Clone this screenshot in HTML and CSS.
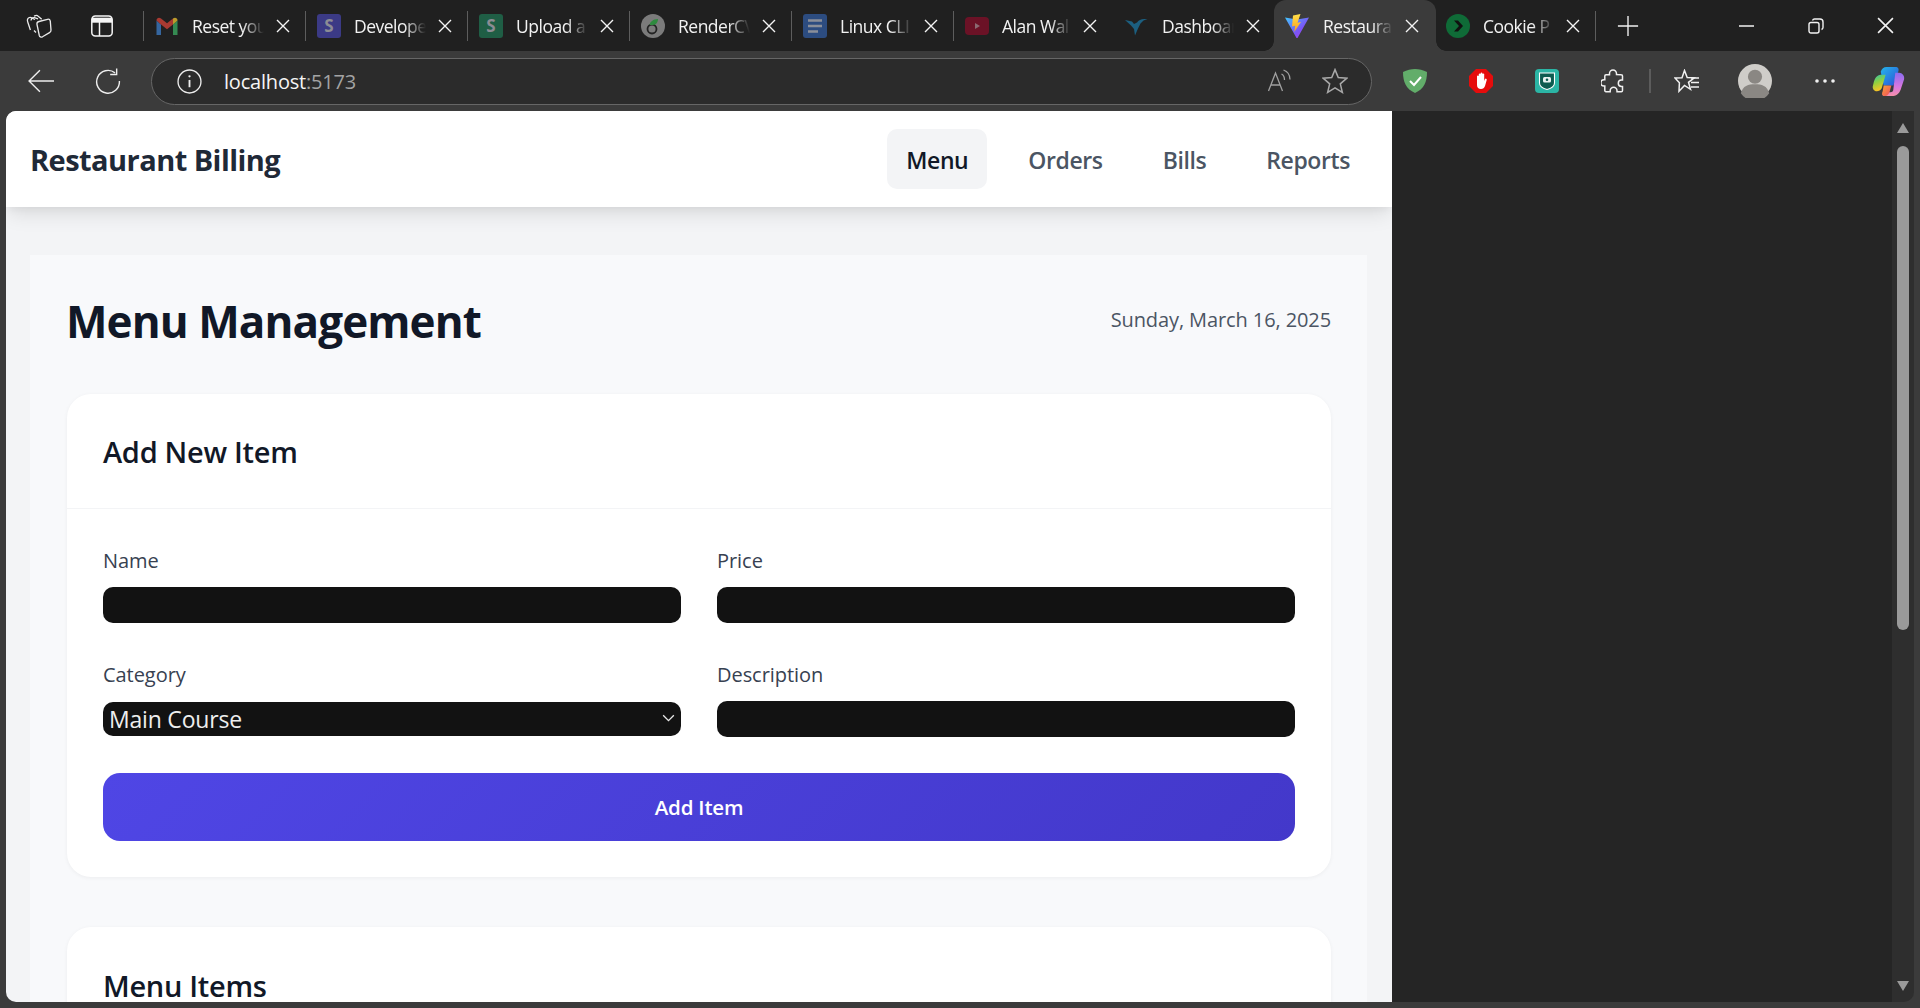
FILE: index.html
```html
<!DOCTYPE html>
<html lang="en">
<head>
<meta charset="utf-8">
<title>Restaurant Billing</title>
<link rel="stylesheet" href="styles.css">
</head>
<body>
<svg class="defs" width="0" height="0" aria-hidden="true">
  <defs>
    <symbol id="x" viewBox="0 0 14 14"><path d="M1 1l12 12M13 1L1 13" stroke="#f4f4f4" stroke-width="1.400" fill="none"/></symbol>
    <linearGradient id="vt" x1="0" y1="0" x2="1" y2="1"><stop offset="0" stop-color="#41c7ff"/><stop offset=".6" stop-color="#7b55f5"/><stop offset="1" stop-color="#b13cf0"/></linearGradient>
    <linearGradient id="vb" x1="0" y1="0" x2="0" y2="1"><stop offset="0" stop-color="#ffe14a"/><stop offset="1" stop-color="#ff9d1a"/></linearGradient>
    <linearGradient id="cpa" x1="0" y1="0" x2="1" y2="1"><stop offset="0" stop-color="#25b6ea"/><stop offset="1" stop-color="#2a50d8"/></linearGradient>
    <linearGradient id="cpb" x1="0" y1="0" x2=".3" y2="1"><stop offset="0" stop-color="#2fc2b0"/><stop offset=".5" stop-color="#8fd140"/><stop offset="1" stop-color="#f7c325"/></linearGradient>
    <linearGradient id="cpc" x1="0" y1="0" x2="0" y2="1"><stop offset="0" stop-color="#8a6cf0"/><stop offset=".6" stop-color="#d977e0"/><stop offset="1" stop-color="#f58fa8"/></linearGradient>
    <linearGradient id="cpd" x1="0" y1="0" x2="1" y2="1"><stop offset="0" stop-color="#f9a03a"/><stop offset="1" stop-color="#ee4a5c"/></linearGradient>
  </defs>
</svg>
<div class="browser">
  <div class="tabbar">
    <div class="tabbar-left">
      <svg class="ico" viewBox="0 0 26 26" width="26" height="26" fill="none" stroke="#eaeaea" stroke-width="1.300"><path d="M9 6.500 5 4.600C3.500 4 2 5 1.500 6.500c-.3 1 0 2 .4 3l2.500 7.500"/><path d="M8 3.200 9.500 2.600c1-.4 2-.1 2.700.6l3.500 3"/><path d="M5 7.500c.2-1.800 1.500-3 3.500-2.800l3.500 1.200"/><path d="M13 8.500l8.500-2.200c1.400-.3 2.500.5 2.800 1.800l.7 9c.1 1.200-.5 2-1.500 2.500l-7 4.200c-1.500.7-2.800.1-3.200-1.300L11 11.500c-.3-1.400.4-2.600 2-3z"/><path d="M8 17.500l2 2"/></svg>
      <svg class="ico ico-vt" viewBox="0 0 24 24" width="24" height="24" fill="none" stroke="#f5f5f5" stroke-width="1.500"><rect x="1.800" y="2" width="20.400" height="20" rx="3.500"/><path d="M2 6.200h20" stroke-width="5"/><path d="M9.500 8v14"/></svg>
    </div>
    <div class="tab">
      <svg class="fav" viewBox="0 0 24 24"><path d="M1.500 6.500V21H6V10.500z" fill="#35669f"/><path d="M22.500 6.500V21H18V10.500z" fill="#358a52"/><path d="M1.500 6.500C1.500 4 4 3 6 4.500l6 4.700 6-4.700V10.500l-6 4.700-6-4.700z" fill="#a83a32"/><path d="M18 4.500c2-1.500 4.500-.5 4.500 2l-4.500 4z" fill="#bb9a2c"/></svg>
      <span class="tab-label">Reset your</span>
      <svg class="tab-x"><use href="#x"/></svg>
    </div>
    <div class="tab">
      <span class="fav-box fav-indigo">S</span>
      <span class="tab-label">Developer</span>
      <svg class="tab-x"><use href="#x"/></svg>
    </div>
    <div class="tab">
      <span class="fav-box fav-green">S</span>
      <span class="tab-label">Upload a</span>
      <svg class="tab-x"><use href="#x"/></svg>
    </div>
    <div class="tab">
      <svg class="fav" viewBox="0 0 24 24"><circle cx="12" cy="12" r="12" fill="#7b7b7b"/><circle cx="11" cy="15" r="4.500" fill="none" stroke="#232323" stroke-width="1.800"/><path d="M8.500 11c.5-3 3.500-6 8.500-6 0 3-2 6-5 6z" fill="#2f8a3f"/></svg>
      <span class="tab-label">RenderCV</span>
      <svg class="tab-x"><use href="#x"/></svg>
    </div>
    <div class="tab">
      <svg class="fav" viewBox="0 0 24 24"><rect width="24" height="24" rx="3" fill="#2c4c80"/><path d="M5 6.500h14M5 12h14M5 17.500h10" stroke="#8a8f99" stroke-width="2.600"/></svg>
      <span class="tab-label">Linux CLI</span>
      <svg class="tab-x"><use href="#x"/></svg>
    </div>
    <div class="tab tab-tight">
      <svg class="fav" viewBox="0 0 24 24"><rect y="3" width="24" height="18" rx="4" fill="#6b1226"/><path d="M10 9l5 3-5 3z" fill="#8b6a72"/></svg>
      <span class="tab-label">Alan Wal</span>
      <svg class="tab-x"><use href="#x"/></svg>
    </div>
    <div class="tab tab-dash">
      <svg class="fav" viewBox="0 0 24 24"><path d="M1 6l7 1.500 2 2.500 3-1.500c1.500-2 4-3.500 7-3.500h3.500l-4 1.500-3 3-2.500 5-3 7-1-6.500-3-3.500z" fill="#1c5f80"/></svg>
      <span class="tab-label">Dashboard</span>
      <svg class="tab-x"><use href="#x"/></svg>
    </div>
    <div class="tab tab-active">
      <svg class="fav" viewBox="0 0 24 24"><path d="M0 3.500l12 2 12-2L12.500 24h-1z" fill="url(#vt)"/><path d="M15.500 0 8 1.500 7 12.500l3.200-.7-1 6.200 6.800-10-3.500.7z" fill="url(#vb)"/></svg>
      <span class="tab-label">Restaura</span>
      <svg class="tab-x"><use href="#x"/></svg>
    </div>
    <div class="tab tab-last">
      <svg class="fav" viewBox="0 0 24 24"><circle cx="12" cy="12" r="12" fill="#0f6b37"/><path d="M8 6.500h4l5 5.500-5 5.500H8l5-5.500z" fill="#111"/></svg>
      <span class="tab-label">Cookie P</span>
      <svg class="tab-x"><use href="#x"/></svg>
    </div>
    <svg class="newtab" viewBox="0 0 24 24" stroke="#f0f0f0" stroke-width="1.500"><path d="M12 1v22M1 12h22"/></svg>
    <div class="winctl">
      <svg viewBox="0 0 16 16" width="16" height="16" stroke="#f2f2f2" stroke-width="1.500"><path d="M0 8h15"/></svg>
      <svg viewBox="0 0 16 16" width="16" height="16" fill="none" stroke="#f2f2f2" stroke-width="1.400"><rect x="1" y="4.500" width="10" height="10.500" rx="2"/><path d="M4.500 2.500c.4-1 1-1.500 2-1.500H12c1.700 0 3 1.300 3 3v5.500c0 1-.5 1.600-1.500 2"/></svg>
      <svg viewBox="0 0 16 16" width="17" height="17" stroke="#f2f2f2" stroke-width="1.500"><path d="M1 1l14 14M15 1L1 15"/></svg>
    </div>
  </div>

  <div class="toolbar">
    <svg class="nav-ico nav-back" viewBox="0 0 24 24" width="26" height="26" fill="none" stroke="#ededed" stroke-width="1.300"><path d="M1 12h23M11 2 1 12l10 10"/></svg>
    <svg class="nav-ico nav-reload" viewBox="0 0 24 24" width="26" height="26" fill="none" stroke="#ededed" stroke-width="1.300"><path d="M18.500 4.500A10.500 10.500 0 1 0 22.500 12"/><path d="M20 .5v5.500h-6"/></svg>
    <div class="address">
      <svg viewBox="0 0 24 24" width="25" height="25" fill="none" stroke="#ededed" stroke-width="1.300"><circle cx="12" cy="12" r="11"/><path d="M12 10.500v7" stroke-width="1.800"/><circle cx="12" cy="7" r="1.100" fill="#ededed" stroke="none"/></svg>
      <span class="url"><span class="url-host">localhost</span><span class="url-port">:5173</span></span>
      <svg class="addr-read" viewBox="0 0 26 24" width="26" height="24" fill="none" stroke="#a0a0a0" stroke-width="1.300"><path d="M1.500 22 8.500 4l7 18M3.800 16h9.500"/><path d="M14.500 5c2 1 3 3 3 6M16.500 1c4 1.500 6.500 5 6.500 9.500"/></svg>
      <svg class="addr-star" viewBox="0 0 24 24" width="26" height="26" fill="none" stroke="#a8a8a8" stroke-width="1.400"><path d="M12 1.500l3 7.300 8 .6-6.100 5.200 1.900 7.900L12 18.300l-6.800 4.200 1.900-7.900L1 9.400l8-.6z"/></svg>
    </div>
    <div class="ext-row">
      <svg viewBox="0 0 24 24" width="24" height="24"><path d="M12 0c4 0 8 1 12 3 0 10-3 17-12 21C3 20 0 13 0 3c4-2 8-3 12-3z" fill="#62ad6a"/><path d="M7 12l4 4 7-8" fill="none" stroke="#fff" stroke-width="2"/></svg>
      <svg viewBox="0 0 24 24" width="24" height="24"><path d="M7 0h10l7 7v10l-7 7H7l-7-7V7z" fill="#e60c0c"/><path d="M8 12V7a1 1 0 0 1 1.800 0V5a1 1 0 0 1 1.800 0V4a1 1 0 0 1 1.800 0v1a1 1 0 0 1 1.800 0v7l.8-2a1 1 0 0 1 1.800.7L16 17c-.7 2-2 3-4 3-2.500 0-4-1.500-4-4z" fill="#fff"/></svg>
      <svg viewBox="0 0 24 24" width="24" height="24"><rect width="24" height="24" rx="4" fill="#2bb5a5"/><path d="M4.500 4h15v10c0 3.500-3.500 5.500-7.500 6.500-4-1-7.500-3-7.500-6.500z" fill="#0d5c50" stroke="#fff" stroke-width="1.100"/><rect x="8" y="8" width="8" height="5.500" rx="1.500" fill="#e8f3f1"/><circle cx="12" cy="10.700" r="1.300" fill="#0d5c50"/></svg>
      <svg viewBox="0 0 24 26" width="24" height="26" fill="none" stroke="#f0f0f0" stroke-width="1.500"><path d="M8.500 5.500a3.500 3.500 0 0 1 7 0v1l4.800.2c.8 0 1.200.5 1.200 1.200V12h-1a3.200 3.200 0 0 0 0 6.400h1v4c0 .8-.4 1.300-1.200 1.300H16v-1a3.400 3.400 0 0 0-6.800 0v1H5c-.8 0-1.200-.5-1.200-1.300v-4.300H3a3.200 3.200 0 0 1 0-6.400h.8V7.900c0-.8.4-1.200 1.200-1.200h3.500z"/></svg>
      <span class="ext-sep"></span>
      <svg viewBox="0 0 26 24" width="26" height="24" fill="none" stroke="#f2f2f2" stroke-width="1.500"><path d="M10.500 1.500l2.700 7 7 .3-5.700 4.500 2 7-6-3.900-5.500 5.800.4-8.500L1 9l7-.3z"/><path d="M17 9h8M17 13.500h8M17 18h8"/></svg>
      <svg viewBox="0 0 36 36" width="34" height="34"><circle cx="18" cy="18" r="18" fill="#cfcdc9"/><circle cx="18" cy="13.500" r="7.500" fill="#8a8783"/><path d="M3 31c2-8 8-9.500 15-9.500S31 23 33 31a18 18 0 0 1-30 0z" fill="#8a8783"/></svg>
      <svg viewBox="0 0 24 6" width="24" height="6" fill="#efefef"><circle cx="4" cy="3" r="1.800"/><circle cx="12" cy="3" r="1.800"/><circle cx="20" cy="3" r="1.800"/></svg>
      <svg viewBox="0 0 34 34" width="33" height="33"><path d="M9 7c1-3 3-5 6-5h9c3 0 4 2 3 5l-5 14H12z" fill="url(#cpa)"/><path d="M2 17c1-3 3-7 7-7h5l-4 14c-1 2-3 3-5 3-3 0-5-3-4-6z" fill="url(#cpb)"/><path d="M24 8h4c3 0 6 3 5 7l-3 9c-1 4-4 8-8 8H13c-2 0-3-2-1-4h7c2 0 3-1 3-3z" fill="url(#cpc)"/><path d="M12 21h8l-2 7c-1 3-3 4-5 4-3 0-3-3-2-5z" fill="url(#cpd)"/></svg>
    </div>
  </div>

  <div class="viewport">
    <div class="page">
      <header class="app-header">
        <div class="brand">Restaurant Billing</div>
        <nav class="app-nav">
          <a class="nav-link nav-link-active">Menu</a>
          <a class="nav-link">Orders</a>
          <a class="nav-link">Bills</a>
          <a class="nav-link">Reports</a>
        </nav>
      </header>
      <main class="app-main">
        <div class="panel">
          <div class="title-row">
            <h1 class="title">Menu Management</h1>
            <div class="date">Sunday, March 16, 2025</div>
          </div>
          <section class="card">
            <h2 class="card-head">Add New Item</h2>
            <form class="card-body">
              <div class="form-grid">
                <label class="field"><span class="field-label">Name</span><input class="control" type="text"></label>
                <label class="field"><span class="field-label">Price</span><input class="control" type="text"></label>
                <label class="field"><span class="field-label">Category</span>
                  <span class="select-wrap">
                    <select class="control-select"><option>Main Course</option><option>Starter</option><option>Dessert</option></select>
                    <svg class="select-arrow" viewBox="0 0 14 9" fill="none" stroke="#e8e8e8" stroke-width="1.500"><path d="M1 1.500l6 6 6-6"/></svg>
                  </span>
                </label>
                <label class="field"><span class="field-label">Description</span><input class="control" type="text"></label>
              </div>
              <button class="add-btn" type="button">Add Item</button>
            </form>
          </section>
          <section class="card card-second">
            <h2 class="card-title-plain">Menu Items</h2>
          </section>
        </div>
      </main>
    </div>
    <div class="side"></div>
    <div class="scrollbar">
      <span class="sb-up"></span>
      <span class="sb-thumb"></span>
      <span class="sb-down"></span>
    </div>
  </div>
</div>
</body>
</html>
```
FILE: styles.css
```css
* { box-sizing: border-box; }
html, body { margin: 0; height: 100%; overflow: hidden; }
body { font-family: "Open Sans", "Noto Sans", "Liberation Sans", sans-serif; background: #3b3b3b; }
.defs { display: block; height: 0; }
.browser { height: 1008px; display: flex; flex-direction: column; background: #3b3b3b; }

/* Tab strip */
.tabbar { height: 51px; flex: none; display: flex; align-items: center; background: #202020; color: #f2f2f2; }
.tabbar-left { width: 143px; flex: none; display: flex; align-items: center; padding-left: 26px; gap: 38px; }
.tab { position: relative; width: 162px; height: 51px; flex: none; display: flex; align-items: center; padding-left: 12px; }
.tab::after { content: ""; position: absolute; left: 0; top: 11px; bottom: 10px; width: 1px; background: #5d5d5d; }
.fav { flex: none; width: 24px; height: 24px; }
.fav-box { width: 24px; height: 24px; flex: none; border-radius: 3px; display: flex; align-items: center; justify-content: center; font-size: 17px; font-weight: 700; color: #8c8c94; }
.fav-indigo { background: #3b3a85; }
.fav-green { background: #1f5e45; }
.tab-label { margin-left: 13px; width: 72px; flex: none; overflow: hidden; white-space: nowrap; font-size: 17.500px; letter-spacing: -0.5px; color: #f2f2f2; -webkit-mask-image: linear-gradient(to right, #000 70%, transparent 100%); mask-image: linear-gradient(to right, #000 70%, transparent 100%); }
.tab-x { margin-left: 12px; width: 14px; height: 14px; flex: none; }
.tab-tight .tab-label { width: 69px; }
.tab-dash { width: 159px; padding-left: 9px; }
.tab-dash::after, .tab-active::after { content: none; }
.tab-dash .tab-label { margin-left: 14px; }
.tab-active { background: #3b3b3b; border-radius: 12px 12px 0 0; padding-left: 11px; }
.tab-active .tab-label { margin-left: 14px; width: 70px; }
.tab-active::before, .tab-active::after { content: ""; position: absolute; top: auto; bottom: 0; width: 10px; height: 10px; }
.tab-active::before { left: -10px; background: radial-gradient(circle at 0 0, transparent 9.500px, #3b3b3b 10px); }
.tab-active::after { left: auto; right: -10px; background: radial-gradient(circle at 100% 0, transparent 9.500px, #3b3b3b 10px); }
.tab-last { width: 160px; padding-left: 10px; }
.tab-last .tab-label { width: 71px; }
.tab-last::after { left: auto; right: 0; }
.newtab { margin-left: 21px; flex: none; width: 22px; height: 22px; }
.winctl { margin-left: auto; display: flex; align-items: center; gap: 53px; padding-right: 26px; }

/* Toolbar */
.toolbar { height: 60px; flex: none; display: flex; align-items: center; padding-left: 28px; background: #3b3b3b; }
.nav-back { flex: none; }
.nav-reload { flex: none; margin-left: 41px; }
.address { margin-left: 30px; width: 1221px; height: 47px; flex: none; display: flex; align-items: center; padding: 0 23px 0 25px; border: 1.500px solid #666; border-radius: 24px; background: #2b2b2b; }
.url { margin-left: 22px; font-size: 20px; letter-spacing: -0.2px; }
.url-host { color: #f5f5f5; }
.url-port { color: #a3a3a3; }
.addr-read { margin-left: auto; }
.addr-star { margin-left: 29px; }
.ext-row { flex: 1; display: flex; align-items: center; padding-left: 31px; }
.ext-row svg { flex: none; }
.ext-row svg:nth-child(2) { margin-left: 42px; }
.ext-row svg:nth-child(3) { margin-left: 42px; }
.ext-row svg:nth-child(4) { margin-left: 42px; }
.ext-sep { width: 2px; height: 24px; margin-left: 24px; background: #5c5c5c; flex: none; }
.ext-row svg:nth-child(6) { margin-left: 23px; }
.ext-row svg:nth-child(7) { margin-left: 38px; }
.ext-row svg:nth-child(8) { margin-left: 41px; }
.ext-row svg:nth-child(9) { margin-left: 35px; }

/* Viewport */
.viewport { height: 891px; flex: none; display: flex; margin-left: 6px; margin-right: 6px; overflow: hidden; border-radius: 10px 0 10px 10px; }
.page { width: 1386px; flex: none; overflow: hidden; background: #f3f4f6; color: #111827; }
.side { flex: 1; background: #252525; }
.scrollbar { width: 22px; flex: none; display: flex; flex-direction: column; align-items: center; background: #2e2e2e; padding: 12px 0 11px; }
.sb-up { width: 0; height: 0; border-left: 6px solid transparent; border-right: 6px solid transparent; border-bottom: 10px solid #9a9a9a; }
.sb-thumb { width: 12px; height: 484px; margin-top: 13px; border-radius: 6px; background: #9a9a9a; }
.sb-down { margin-top: auto; width: 0; height: 0; border-left: 6px solid transparent; border-right: 6px solid transparent; border-top: 10px solid #9a9a9a; }

/* App */
.app-header { position: relative; z-index: 1; height: 96px; display: flex; align-items: center; justify-content: space-between; padding: 0 23px 0 24px; background: #fff; box-shadow: 0 10px 19px -3px rgba(0,0,0,.1), 0 4px 8px -2px rgba(0,0,0,.05); }
.brand { font-size: 29px; line-height: 40px; padding-top: 1px; font-weight: 700; color: #1f2937; letter-spacing: -0.55px; }
.app-nav { display: flex; gap: 22px; }
.nav-link { height: 60px; display: flex; align-items: center; padding: 2px 19px 0; border-radius: 10px; font-size: 23px; font-weight: 600; color: #4b5563; letter-spacing: -0.4px; }
.nav-link-active { background: #f3f4f6; color: #111827; }
.app-main { padding: 48px 25px 0 24px; }
.panel { padding: 37px 36px 0 37px; background: #f8f9fb; }
.title-row { display: flex; justify-content: space-between; align-items: center; height: 58px; margin-bottom: 44px; }
.title { margin: 0 0 0 -1px; font-size: 44px; line-height: 58px; font-weight: 700; color: #111827; letter-spacing: -0.9px; }
.date { font-size: 20px; color: #4b5563; letter-spacing: -0.1px; margin-top: -4px; }
.card { background: #fff; border-radius: 24px; box-shadow: 0 1px 4px rgba(0,0,0,.05); }
.card-head { margin: 0; height: 115px; display: flex; align-items: center; padding: 0 36px; border-bottom: 1px solid #f3f4f6; font-size: 29px; font-weight: 600; color: #111827; letter-spacing: -0.3px; }
.card-body { padding: 39px 36px 36px; }
.form-grid { display: grid; grid-template-columns: 1fr 1fr; gap: 39px 36px; }
.field { display: flex; flex-direction: column; }
.field-label { height: 25px; margin-bottom: 14px; font-size: 20px; line-height: 25px; font-weight: 500; color: #374151; letter-spacing: -0.05px; }
.control { height: 36px; width: 100%; border: 0; border-radius: 10px; background: #121212; outline: 0; }
.select-wrap { position: relative; display: block; height: 36px; padding-top: 1px; }
.control-select { appearance: none; -webkit-appearance: none; display: block; height: 34px; width: 100%; padding: 0 0 0 6px; border: 0; border-radius: 10px; background-color: #121212; color: #eee; color-scheme: dark; font-family: inherit; font-size: 23px; letter-spacing: -0.2px; outline: 0; }
.select-arrow { position: absolute; right: 6px; top: 13px; width: 13px; height: 8px; pointer-events: none; }
.add-btn { display: block; width: 100%; height: 68px; margin-top: 36px; border: 0; border-radius: 17px; background: linear-gradient(135deg, #4f46e5, #4338ca); color: #fff; font-family: inherit; font-size: 20.500px; font-weight: 600; letter-spacing: -0.2px; }
.card-second { margin-top: 50px; height: 200px; padding: 40px 36px 0; }
.card-title-plain { margin: 0; font-size: 29px; line-height: 38px; font-weight: 600; color: #111827; letter-spacing: -0.3px; }
```
